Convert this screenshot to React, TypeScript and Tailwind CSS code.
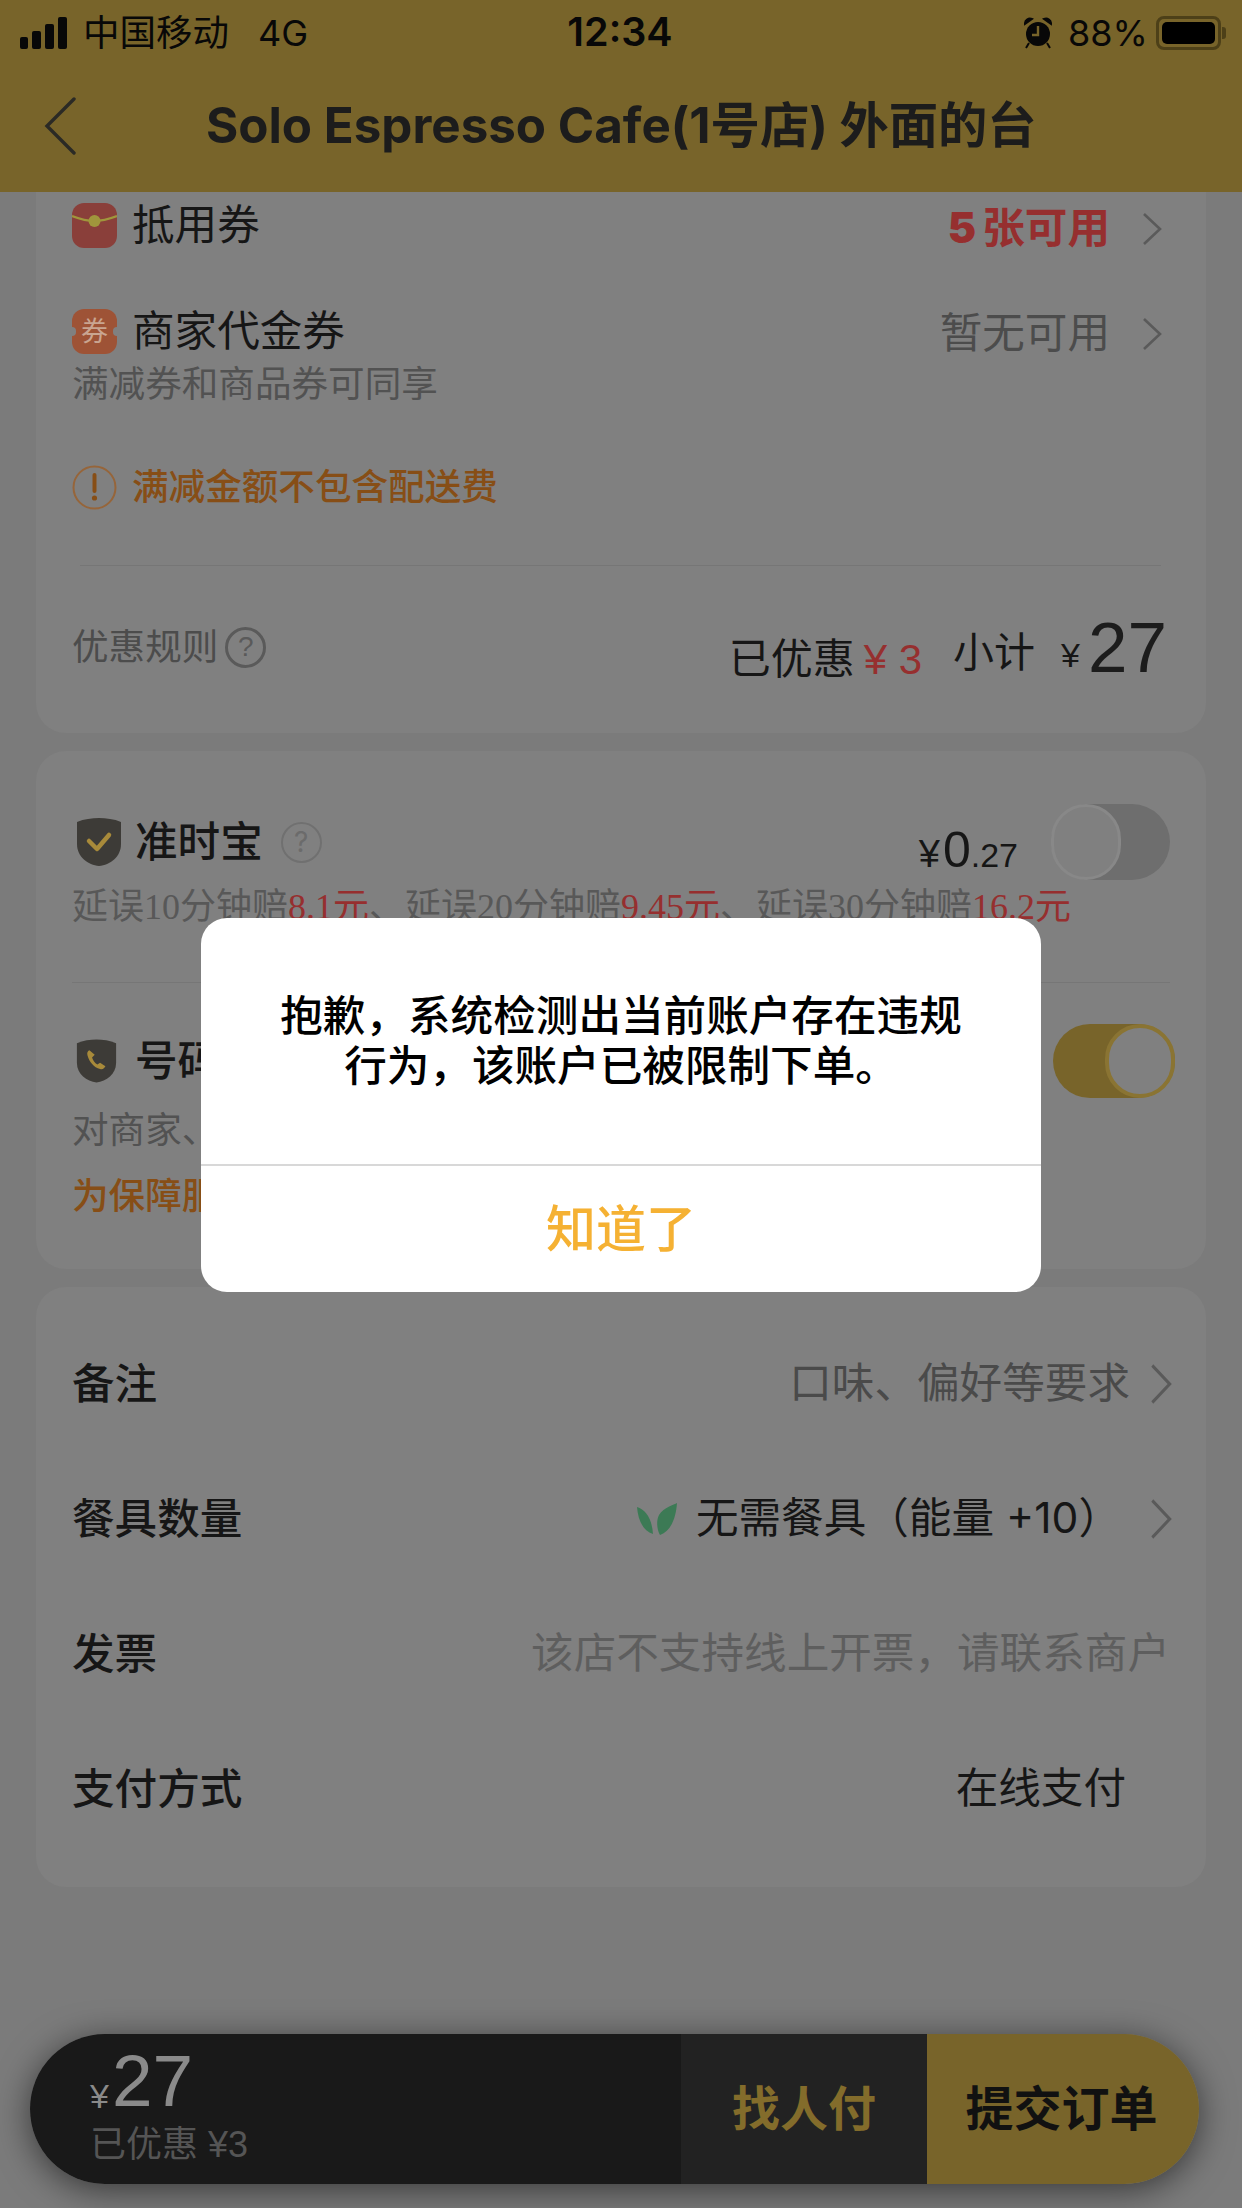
function Chevron({ big = false }: { big?: boolean }) {
  return (
    <svg className={big ? "w-[24px] h-[42px]" : "w-[22px] h-[34px]"} viewBox="0 0 22 34" fill="none" preserveAspectRatio="none">
      <path d="M3 2l16 15L3 32" stroke="#5a5a5a" strokeWidth="2.6" />
    </svg>
  );
}

function Shield({ children, size }: { children: React.ReactNode; size: string }) {
  return (
    <svg className={size} viewBox="0 0 46 50" fill="none">
      <path d="M23 1c7 0 15 1 22 4v22c0 13-11 21-22 22C12 48 1 40 1 27V5c7-3 15-4 22-4z" fill="#3d3b37" />
      {children}
    </svg>
  );
}

function Toggle({ on }: { on: boolean }) {
  if (on) {
    return (
      <div className="w-[122px] h-[74px] rounded-full bg-[#78642a] flex justify-end mr-[-5px]">
        <div className="w-[70px] h-[74px] rounded-full bg-[#808080] border-[4px] border-[#8a7433]" />
      </div>
    );
  }
  return (
    <div className="w-[119px] h-[76px] rounded-full bg-[#6e6e6e] flex">
      <div className="w-[70px] h-[76px] rounded-full bg-[#808080] border-[3px] border-[#888888]" />
    </div>
  );
}

function StatusBar() {
  return (
    <div className="h-[66px] flex items-center justify-between pl-[20px] pr-[16px] text-[36px] leading-none text-[#080808]">
      <div className="flex items-center w-[400px]">
        <div className="flex items-end gap-[4px] h-[32px]">
          <div className="w-[8px] h-[12px] rounded-[2px] bg-[#080808]" />
          <div className="w-[9px] h-[18px] rounded-[2px] bg-[#080808]" />
          <div className="w-[9px] h-[25px] rounded-[2px] bg-[#080808]" />
          <div className="w-[9px] h-[32px] rounded-[2px] bg-[#080808]" />
        </div>
        <span className="ml-[16px] text-[36.5px]">中国移动</span>
        <span className="ml-[29px] text-[36px]">4G</span>
      </div>
      <span className="font-semibold text-[39.5px] ml-[-6px]">12:34</span>
      <div className="flex items-center w-[400px] justify-end">
        <svg className="w-[28px] h-[32px] mr-[16px]" viewBox="0 0 28 32" fill="#080808">
          <circle cx="14" cy="17" r="12" />
          <path d="M1 7a5 5 0 0 1 7-5zM27 7a5 5 0 0 0-7-5zM5 26l-3 5M23 26l3 5" stroke="#080808" strokeWidth="2" />
          <path d="M14 9v9H8" stroke="#78642a" strokeWidth="2.4" fill="none" />
        </svg>
        <span className="text-[36px]">88%</span>
        <div className="ml-[8px] w-[65px] h-[34px] rounded-[8px] border-[3px] border-[#4d4018] p-[3px]">
          <div className="w-full h-full rounded-[5px] bg-black" />
        </div>
        <div className="ml-[1px] w-[4px] h-[12px] rounded-r-[3px] bg-[#4d4018]" />
      </div>
    </div>
  );
}

function Header() {
  return (
    <div className="h-[192px] bg-[#78642a] shrink-0">
      <StatusBar />
      <div className="flex items-center h-[126px] pb-[6px]">
        <svg className="ml-[44px] w-[33px] h-[58px]" viewBox="0 0 33 58" fill="none">
          <path d="M30 2L3 29l27 27" stroke="#2b2a25" strokeWidth="3.4" strokeLinecap="round" />
        </svg>
        <span className="ml-[129px] text-[49.3px] font-bold leading-none text-[#1c1c1c]">Solo Espresso Cafe(1号店) 外面的台</span>
      </div>
    </div>
  );
}

function DiscountCard() {
  return (
    <div className="mx-[36px] bg-[#808080] rounded-b-[30px] px-[36px] pb-[31px]">
      <div className="h-[66px] flex items-center">
        <svg className="w-[45px] h-[45px]" viewBox="0 0 45 45">
          <rect width="45" height="45" rx="12" fill="#8a3f3a" />
          <path d="M0 13c8 3 15 5 22 5s15-2 23-5" stroke="#a0963c" strokeWidth="2.4" fill="none" />
          <circle cx="22.5" cy="18" r="6" fill="#a0963c" />
        </svg>
        <span className="ml-[15px] text-[42.6px] leading-none text-[#161616]">抵用券</span>
        <span className="ml-auto text-[42.6px] leading-none text-[#962f2f] font-semibold mt-[6px]"><b>5</b><span className="ml-[6px]">张可用</span></span>
        <div className="ml-[31px] mr-[7px] mt-[8px] flex"><Chevron /></div>
      </div>
      <div className="mt-[43px] h-[60px] flex items-center">
        <div className="relative w-[45px] h-[45px] rounded-[12px] bg-[#9e5336] flex items-center justify-center text-[27px] leading-none text-[#c9a591]">
          券
          <div className="absolute left-[-4px] top-[18px] w-[8px] h-[9px] rounded-full bg-[#808080]" />
          <div className="absolute right-[-4px] top-[18px] w-[8px] h-[9px] rounded-full bg-[#808080]" />
        </div>
        <span className="ml-[15px] text-[42.6px] leading-none text-[#161616]">商家代金券</span>
        <span className="ml-auto text-[42.6px] leading-none text-[#4c4c4c] mt-[5px]">暂无可用</span>
        <div className="ml-[31px] mr-[7px] mt-[5px] flex"><Chevron /></div>
      </div>
      <div className="mt-[3px] text-[36.6px] leading-[40px] text-[#525252]">满减券和商品券可同享</div>
      <div className="mt-[58px] h-[50px] flex items-center">
        <svg className="w-[45px] h-[45px]" viewBox="0 0 45 45" fill="none">
          <circle cx="22.5" cy="22.5" r="21" stroke="#96653a" strokeWidth="2" />
          <path d="M22.5 10v16" stroke="#874e16" strokeWidth="4" strokeLinecap="round" />
          <circle cx="22.5" cy="33" r="2.6" fill="#874e16" />
        </svg>
        <span className="ml-[15px] text-[36.6px] leading-none font-medium text-[#874e16]">满减金额不包含配送费</span>
      </div>
      <div className="mt-[53px] ml-[8px] mr-[9px] h-[1px] bg-[#767676]" />
      <div className="mt-[26px] h-[110px] flex items-center font-['Liberation_Sans','Noto_Sans_CJK_SC',sans-serif]">
        <span className="text-[36.6px] leading-none text-[#4c4c4c] mt-[2px]">优惠规则</span>
        <div className="ml-[7px] w-[41px] h-[41px] rounded-full border-[3px] border-[#5a5a5a] flex items-center justify-center text-[28px] leading-none text-[#5a5a5a]">?</div>
        <span className="ml-auto text-[42px] leading-none text-[#161616] mt-[25px]">已优惠</span>
        <span className="ml-[9px] text-[42px] leading-none text-[#962f2f] mt-[25px]">¥ 3</span>
        <span className="ml-[31px] text-[41px] leading-none text-[#161616] mt-[12px]">小计</span>
        <span className="ml-[26px] text-[34px] leading-none text-[#161616] mt-[16px]">¥</span>
        <span className="ml-[8px] mr-[3px] text-[71px] leading-none text-[#1c1c1c]">27</span>
      </div>
    </div>
  );
}

function ServiceCard() {
  return (
    <div className="mt-[18px] mx-[36px] bg-[#808080] rounded-[30px] px-[36px] pt-[53px] pb-[53px]">
      <div className="h-[76px] flex items-center">
        <div className="ml-[4px] flex">
          <Shield size="w-[46px] h-[50px]">
            <path d="M13 24l8 8 12-14" stroke="#a88a3a" strokeWidth="4.5" strokeLinecap="round" strokeLinejoin="round" />
          </Shield>
        </div>
        <span className="ml-[13px] text-[42.6px] leading-none font-medium text-[#161616]">准时宝</span>
        <div className="ml-[18px] w-[41px] h-[41px] rounded-full border-[2px] border-[#707070] flex items-center justify-center text-[28px] leading-none text-[#6b6b6b]">?</div>
        <span className="ml-auto text-[34px] leading-none text-[#161616] mt-[15px] font-['Liberation_Sans',sans-serif]"><span className="text-[38px] mr-[3px]">¥</span><span className="text-[50px]">0</span>.27</span>
        <div className="ml-[33px]"><Toggle on={false} /></div>
      </div>
      <div className="mt-[7px] h-[40px] text-[36px] leading-[40px] whitespace-nowrap font-['Liberation_Serif','Noto_Sans_CJK_SC',serif] text-[#585858]">
        延误10分钟赔<span className="text-[#962f2f]">8.1元</span>、延误20分钟赔<span className="text-[#962f2f]">9.45元</span>、延误30分钟赔<span className="text-[#962f2f]">16.2元</span>
      </div>
      <div className="mt-[55px] h-[1px] bg-[#767676]" />
      <div className="mt-[41px] h-[74px] flex items-center">
        <div className="ml-[4px] flex">
          <Shield size="w-[41px] h-[46px]">
            <path d="M15 13c-2 1-3 3-2 6 2 7 7 13 14 15 3 1 5-1 6-3l-6-4-3 2c-3-2-5-5-6-8l3-3z" fill="#a88a3a" />
          </Shield>
        </div>
        <span className="ml-[18px] text-[42.6px] leading-none font-medium text-[#161616]">号码保护</span>
        <div className="ml-auto"><Toggle on /></div>
      </div>
      <div className="mt-[12px] h-[40px] text-[36.6px] leading-[40px] text-[#525252]">对商家、骑手隐藏</div>
      <div className="mt-[26px] h-[40px] text-[36.6px] leading-[40px] font-medium text-[#874e16]">为保障服务质量</div>
    </div>
  );
}

function InfoRow({ label, children }: { label: string; children: React.ReactNode }) {
  return (
    <div className="h-[135px] flex items-center justify-between">
      <span className="text-[42.6px] leading-none font-medium text-[#161616] mt-[2px]">{label}</span>
      <div className="flex items-center">{children}</div>
    </div>
  );
}

function InfoCard() {
  return (
    <div className="mt-[18px] mx-[36px] bg-[#808080] rounded-[30px] px-[36px] pt-[29px] pb-[31px]">
      <InfoRow label="备注">
        <span className="text-[42.6px] leading-none text-[#4a4a4a]">口味、偏好等要求</span>
        <div className="ml-[19px] mr-[-3px] flex"><Chevron big /></div>
      </InfoRow>
      <InfoRow label="餐具数量">
        <svg className="w-[42px] h-[34px]" viewBox="0 0 42 34" fill="#3c7a55">
          <path d="M1 5c9 3 15 12 16 27C7 29 2 18 1 5z" />
          <path d="M41 1c-3 2-13 4-18 12-3 6-2 15 1 20 11-4 16-17 17-32z" />
        </svg>
        <span className="ml-[18px] text-[42.6px] leading-none text-[#161616]">{"无需餐具\uFF08能量 +10\uFF09"}</span>
        <div className="ml-[28px] mr-[-3px] flex"><Chevron big /></div>
      </InfoRow>
      <InfoRow label="发票">
        <span className="text-[42.6px] leading-none text-[#5e5e5e]">{"该店不支持线上开票\uFF0C请联系商户"}</span>
      </InfoRow>
      <InfoRow label="支付方式">
        <span className="mr-[44px] text-[42.6px] leading-none text-[#161616]">在线支付</span>
      </InfoRow>
    </div>
  );
}

function BottomBar() {
  return (
    <div className="absolute left-[30px] top-[2034px] w-[1169px] h-[150px] rounded-[75px] overflow-hidden flex shadow-[0_6px_34px_rgba(0,0,0,0.55)]">
      <div className="w-[651px] bg-[#191919] pl-[60px] pt-[17px] font-['Liberation_Sans','Noto_Sans_CJK_SC',sans-serif]">
        <div className="flex items-end h-[66px] text-[#8a8a8a] leading-none">
          <span className="text-[34px] mb-[4px]">¥</span>
          <span className="ml-[3px] text-[73px]">27</span>
        </div>
        <div className="mt-[10px] text-[36px] leading-none text-[#555555]">已优惠 ¥3</div>
      </div>
      <div className="w-[246px] bg-[#222222] flex items-center justify-center text-[48px] leading-none font-bold text-[#836c2b]">找人付</div>
      <div className="flex-1 bg-[#78642a] flex items-center justify-center pr-[3px] text-[48px] leading-none font-bold text-[#111111]">提交订单</div>
    </div>
  );
}

function AlertDialog() {
  return (
    <div className="absolute inset-0 flex items-center justify-center pt-[1px]">
      <div className="w-[840px] rounded-[26px] bg-white overflow-hidden">
        <div className="h-[246px] flex items-center justify-center text-center text-[42.6px] leading-[50px] font-medium text-black">
          <p>{"抱歉\uFF0C系统检测出当前账户存在违规"}<br />{"行为\uFF0C该账户已被限制下单。"}</p>
        </div>
        <div className="h-[2px] bg-[#d8d8d8]" />
        <div className="h-[126px] flex items-center justify-center text-[50px] leading-none font-medium text-[#f5b133]">知道了</div>
      </div>
    </div>
  );
}

export default function App() {
  return (
    <div className="relative w-[1242px] h-[2208px] overflow-hidden bg-[#7b7b7b] font-['Inter','Noto_Sans_CJK_SC',sans-serif]">
      <Header />
      <DiscountCard />
      <ServiceCard />
      <InfoCard />
      <BottomBar />
      <AlertDialog />
    </div>
  );
}
